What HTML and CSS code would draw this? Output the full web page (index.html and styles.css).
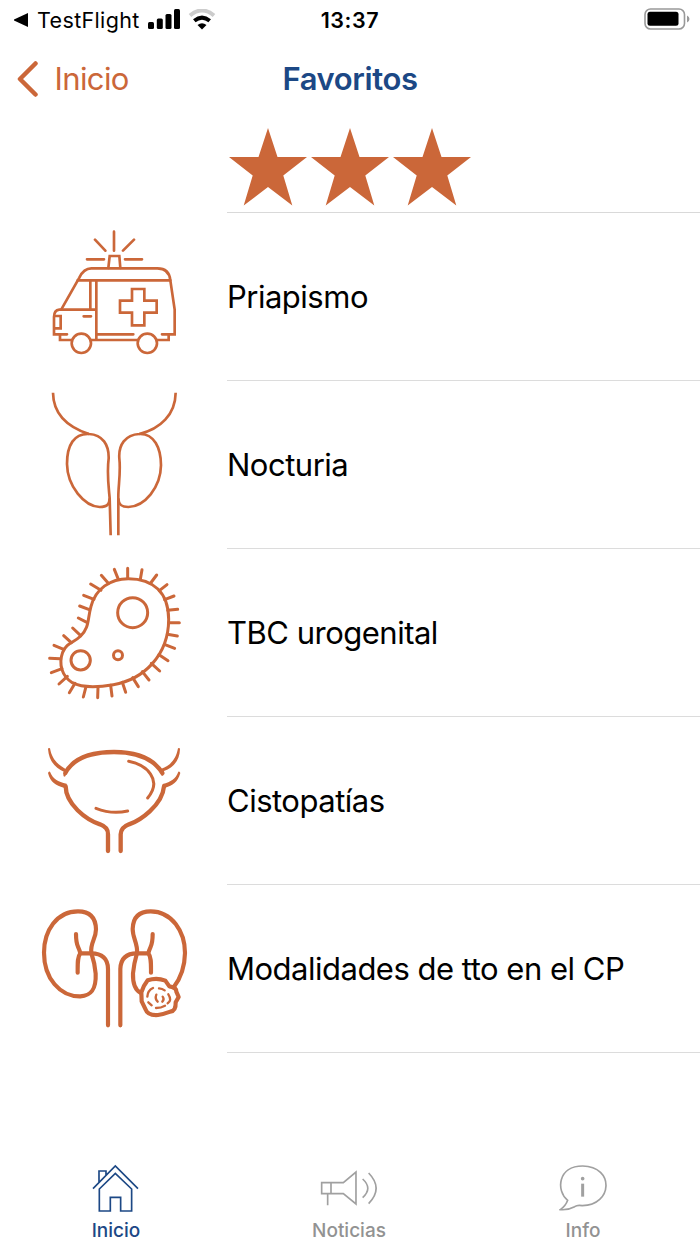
FILE: index.html
```html
<!DOCTYPE html>
<html lang="es">
<head>
<meta charset="utf-8">
<title>Favoritos</title>
<link rel="stylesheet" href="styles.css">
</head>
<body>
<div class="screen">
  <div class="status">
    <div class="status-left">
      <svg class="back-app" viewBox="0 0 14 14"><path d="M14 0V14L0 7.6V6.4Z"/></svg>
      <span class="app-name">TestFlight</span>
      <svg class="signal" viewBox="0 0 32 20"><rect x="0" y="13" width="6" height="7" rx="1.5"/><rect x="8.800" y="9.500" width="6" height="10.500" rx="1.500"/><rect x="17.500" y="5" width="6" height="15" rx="1.500"/><rect x="26" y="0" width="6" height="20" rx="1.500"/></svg>
      <svg class="wifi" viewBox="0 0 28 21"><path class="wifi-off" d="M2 6.500Q14-3.500 26 6.500"/><path class="wifi-on" d="M6.300 11.700Q14 5.500 21.700 11.700"/><path d="M14 20.500L9.500 16Q14 12.500 18.500 16Z"/></svg>
    </div>
    <div class="clock">13:37</div>
    <div class="status-right">
      <svg class="battery" viewBox="0 0 46 22"><rect class="battery-case" x="1" y="1" width="39.500" height="20" rx="5.500"/><rect x="3.500" y="3.700" width="31" height="14" rx="2.500"/><path class="battery-tip" d="M43 7.500Q45.500 8.500 45.500 11T43 14.500Z"/></svg>
    </div>
  </div>

  <header class="nav">
    <a class="nav-back"><svg class="chevron" viewBox="0 0 21 36"><path d="M18.500 2.500L3 18L18.500 33.500"/></svg><span>Inicio</span></a>
    <h1 class="nav-title">Favoritos</h1>
  </header>

  <div class="stars">
    <svg class="star" viewBox="0 0 78 78"><path d="M39 0L48.500 29H78L54.300 47.500L63.300 77.500L39 59L14.700 77.500L23.700 47.500L0 29H29.500Z"/></svg>
    <svg class="star" viewBox="0 0 78 78"><path d="M39 0L48.500 29H78L54.300 47.500L63.300 77.500L39 59L14.700 77.500L23.700 47.500L0 29H29.500Z"/></svg>
    <svg class="star" viewBox="0 0 78 78"><path d="M39 0L48.500 29H78L54.300 47.500L63.300 77.500L39 59L14.700 77.500L23.700 47.500L0 29H29.500Z"/></svg>
  </div>

  <ul class="list">
    <li class="row">
      <svg class="row-icon ambulance" viewBox="-120 -21 681 501">
        <path d="M222 35V92M165 59L196 92M282 59L249 92M141 118H192M255 118H306"/>
        <path d="M205 144L209 108H238L241 144"/>
        <path d="M64 268L118 173Q131 145 154 145H352Q388 145 391 181L404 269V343H366"/>
        <path d="M113 181H391M151 182V269M169 181V359M167 269H58Q42 271 42 291V343H81M44 288H62V325H44M131 289H153"/>
        <path d="M276 207H313V242H350V278H313V316H276V278H240V242H276Z"/>
        <path d="M170 343H280M60 344V360H95M153 360H293M351 360H386V344"/>
        <circle cx="124" cy="370" r="29"/><circle cx="322" cy="370" r="29"/>
      </svg>
      <span class="label">Priapismo</span>
    </li>
    <li class="row">
      <svg class="row-icon prostate" viewBox="-120 3 681 501">
        <path d="M39 38C40 104 83 141 147 162C188 164 207 195 206 235C200 281 206 320 209 355L212 466"/>
        <path d="M147 162C102 160 81 195 81 252C82 319 133 379 179 381C203 381 208 372 209 355"/>
        <path d="M407 38C406 104 361 147 298 162C256 164 235 195 238 235C243 281 234 320 235 355L235 466"/>
        <path d="M298 162C343 160 363 205 363 256C362 323 314 379 265 381C243 381 236 373 235 355"/>
      </svg>
      <span class="label">Nocturia</span>
    </li>
    <li class="row">
      <svg class="row-icon microbe" viewBox="-120 -18 681 501">
        <path d="M265 71C211 71 167 101 153 154C142 195 148 218 122 243C101 264 80 262 68 292C55 328 66 364 97 383C130 400 180 396 220 389C309 374 386 303 386 193C386 113 340 71 265 71Z"/>
        <path d="M263 70V40M301 73L306 44M332 84L350 60M358 107L381 89M374 134L402 123M383 166L413 163M387 203H418M382 238L412 243M373 268L404 280M357 299L384 317M334 325L359 348M307 350L327 375M278 368L295 395M247 382L257 412M212 391L216 423M174 397L173 428M138 395L130 426M105 385L88 413M82 364L57 387M66 341L34 353M60 311L29 310M71 283L42 271M94 263L71 242M122 242L98 219M142 203L115 189M148 164L119 153M162 133L131 121M183 106L152 87M205 85L184 61M235 73L223 43"/>
        <circle cx="278" cy="173" r="45"/><circle cx="122" cy="316" r="29"/><circle cx="234" cy="301" r="13.500"/>
      </svg>
      <span class="label">TBC urogenital</span>
    </li>
    <li class="row">
      <svg class="row-icon bladder" viewBox="-120 -54 681 501">
        <path class="thick" d="M76 114Q110 51 222 51Q328 51 367 114"/>
        <path class="thick" d="M77 154C77 207 138 254 180 268Q205 277 204 298V348M372 154C367 211 300 257 267 268Q243 277 242 298V348"/>
        <path class="mid" d="M168 220Q215 239 263 228M266 79C319 89 369 134 323 189"/>
        <path class="solid" d="M24 42Q25 37 30 40C36 74 54 90 83 105L76 124Q71 128 70 120L73 111C45 98 27 79 24 42ZM420 42Q419 37 414 40C408 74 390 92 364 101L363 119Q367 126 371 119L372 108C399 98 419 78 420 42ZM24 114Q26 108 30 110C39 132 53 140 80 146L81 160L71 158C48 151 31 142 24 114ZM421 114Q419 108 415 110C407 132 393 140 368 147L367 160L376 158C398 151 413 142 421 114Z"/>
      </svg>
      <span class="label">Cistopatías</span>
    </li>
    <li class="row">
      <svg class="row-icon kidneys" viewBox="-90 -30 681 501">
        <path d="M184 174C180 143 198 132 198 103C197 64 176 49 144 49C80 49 42 107 42 173C42 250 90 305 151 304C184 302 199 283 197 236Q195 207 184 174Z"/>
        <path d="M138 117C138 157 145 149 151 175C142 187 143 204 143 233M151 175H184C216 175 234 191 234 222V391"/>
        <path d="M333 294C314 285 308 265 309 235Q312 205 321 174C324 146 308 130 308 102C309 64 330 49 362 49C425 49 465 109 465 174Q464 234 431 277"/>
        <path d="M368 117C368 157 361 149 355 175C364 187 363 204 363 233M355 175H321C289 175 272 191 271 222V391"/>
        <path d="M353 256Q380 247 406 257L418 274Q440 277 439 290L446 306L437 322Q438 348 421 350Q400 358 384 360Q353 362 347 344L335 319L334 292Q339 274 353 256Z"/>
        <path class="fine" d="M352 305Q353 286 369 279M387 280Q397 281 404 286M415 298Q427 316 413 325M405 332Q393 339 378 339M355 322L365 331M379 299Q374 311 383 320M398 305Q404 313 397 320"/>
      </svg>
      <span class="label">Modalidades de tto en el CP</span>
    </li>
  </ul>

  <nav class="tabs">
    <a class="tab active">
      <svg class="tab-icon home" viewBox="98 42 142 144"><path d="M101 116L168 48L236 116M119 96V63H140V75M120 183V117L168 70L217 117V183H184V142H153V183Z"/></svg>
      <span>Inicio</span>
    </a>
    <a class="tab">
      <svg class="tab-icon horn" viewBox="780 42 172 144"><path d="M785 98H850L888 66V162L850 131H785ZM813 98V131M803 131V166M908 87Q939 115 908 143M926 69Q971 115 926 161"/></svg>
      <span>Noticias</span>
    </a>
    <a class="tab">
      <svg class="tab-icon info" viewBox="58 42 142 144"><path d="M84 151C48 122 55 48 129 48C226 50 219 166 128 167Q113 164 105 170Q84 181 62 179Q78 168 84 151Z"/><path class="info-stem" d="M129 101V140"/><circle cx="129" cy="86" r="5.500"/></svg>
      <span>Info</span>
    </a>
  </nav>
</div>
</body>
</html>
```
FILE: styles.css
```css
* { box-sizing: border-box; }

body {
  margin: 0;
  background: #fff;
  color: #000;
  font-family: Inter, "Liberation Sans", sans-serif;
}

svg { display: block; flex: none; }

.screen {
  width: 700px;
  height: 1244px;
  display: flex;
  flex-direction: column;
}

.status {
  height: 40px;
  display: grid;
  grid-template-columns: 1fr auto 1fr;
  align-items: center;
}

.status-left { display: flex; align-items: center; padding-left: 14px; }
.back-app { width: 14px; height: 14px; }
.app-name { margin-left: 9px; width: 102px; font-size: 21.5px; letter-spacing: 0.35px; white-space: nowrap; }
.signal { width: 32px; height: 20px; margin-left: 9px; margin-bottom: 2px; }
.wifi { width: 28px; height: 21px; margin-left: 8px; margin-bottom: 2px; }
.wifi path { fill: #000; }
.wifi .wifi-off { fill: none; stroke: #ccc; stroke-width: 4; }
.wifi .wifi-on { fill: none; stroke: #000; stroke-width: 4; }
.clock { font-size: 21.5px; font-weight: 600; letter-spacing: 0.6px; }
.status-right { display: flex; justify-content: flex-end; padding-right: 10px; }
.battery { width: 46px; height: 22px; margin-bottom: 2px; }
.battery-case { fill: none; stroke: #999; stroke-width: 1.6; }
.battery-tip { fill: #999; }

.nav {
  height: 77px;
  display: grid;
  grid-template-columns: 1fr auto 1fr;
  align-items: center;
}

.nav-back { display: flex; align-items: center; padding-left: 17px; color: #cb6739; font-size: 31px; letter-spacing: -0.6px; }
.chevron { width: 21px; height: 36px; margin-right: 16.500px; }
.chevron path { fill: none; stroke: #cb6739; stroke-width: 4.5; stroke-linecap: round; stroke-linejoin: round; }
.nav-title { margin: 0; color: #1c4885; font-size: 31px; font-weight: 600; letter-spacing: -0.4px; }

.stars {
  height: 96px;
  margin-left: 227px;
  padding: 11px 0 0 2px;
  display: flex;
  gap: 4px;
  border-bottom: 1px solid #d9d9d9;
}
.star { width: 78px; height: 78px; fill: #cb6739; }

.list { margin: 0; padding: 0; list-style: none; }
.row { height: 168px; display: flex; }
.row-icon {
  width: 227px;
  height: 167px;
  fill: none;
  stroke: #cb6739;
  stroke-linecap: round;
  stroke-linejoin: round;
}
.label {
  flex: 1;
  padding-top: 1px;
  border-bottom: 1px solid #dcdcdc;
  font-size: 31px;
  line-height: 166px;
  letter-spacing: -0.5px;
  white-space: nowrap;
}
.ambulance { stroke-width: 8; stroke-linejoin: miter; }
.prostate { stroke-width: 8; stroke-linecap: butt; }
.microbe { stroke-width: 9; }
.bladder .thick { stroke-width: 13; }
.bladder .mid { stroke-width: 9; }
.bladder .solid { fill: #cb6739; stroke: none; }
.kidneys { stroke-width: 12.5; }
.kidneys .fine { stroke-width: 7; }

.tabs {
  margin-top: auto;
  height: 90px;
  display: grid;
  grid-template-columns: 232px 234px 234px;
}
.tab {
  display: flex;
  flex-direction: column;
  align-items: center;
  padding-top: 10px;
  color: #929292;
  font-size: 19px;
  font-weight: 500;
}
.tab span { margin-top: 7px; line-height: 23px; }
.tab.active { color: #1c4885; }
.tab-icon { height: 48px; fill: none; stroke: currentColor; stroke-width: 5; }
.home { width: 47.3px; }
.horn { width: 57.3px; stroke: #a0a0a0; }
.info { width: 47.3px; stroke: #a0a0a0; }
.info .info-stem { stroke-width: 9; }
.info circle { fill: #a0a0a0; stroke: none; }
```
